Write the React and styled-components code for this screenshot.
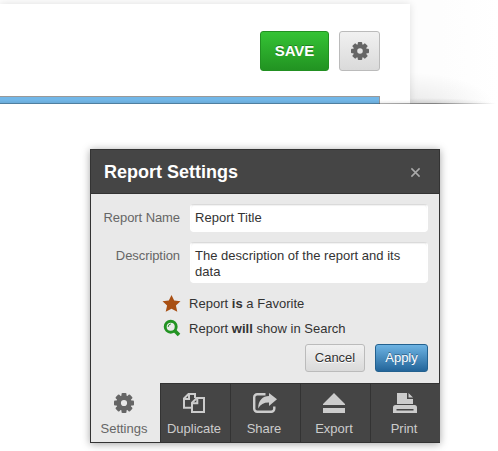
import React from "react";
import styled, { createGlobalStyle, css } from "styled-components";

const GlobalStyle = createGlobalStyle`
  *, *::before, *::after { box-sizing: border-box; }
  html, body { margin: 0; height: 100%; overflow: hidden; background: #fff; }
  body { font-family: "Liberation Sans", Arial, Helvetica, sans-serif; font-size: 13px; color: #333; }
  button, input, textarea { font: inherit; margin: 0; }
`;

const Page = styled.main`
  width: 498px;
  height: 451px;
  overflow: hidden;
  background: #fff;
`;

const Backdrop = styled.section`
  height: 104px;
  padding-top: 4px;
  position: relative;
  overflow: hidden;
  background:
    radial-gradient(ellipse 70px 6px at 425px 104px, rgba(0, 0, 0, 0.14), transparent),
    radial-gradient(ellipse 88px 32px at 405px 104px, rgba(0, 0, 0, 0.08), rgba(0, 0, 0, 0.035) 55%, transparent),
    linear-gradient(to right, #fdfdfd 440px, #fff);

  &::after {
    content: "";
    position: absolute;
    inset: auto 0 0 0;
    height: 4px;
    background:
      linear-gradient(to right, rgba(0, 0, 0, 0.25) 0 370px, rgba(0, 0, 0, 0.38) 435px, transparent 496px) bottom / 100% 1px no-repeat,
      linear-gradient(to top, rgba(0, 0, 0, 0.09), transparent) left / 410px 4px no-repeat;
  }
`;

const Sheet = styled.div`
  width: 410px;
  height: 100px;
  padding: 27px 30px 0 0;
  background: #fff;
  box-shadow: 0 0 8px rgba(0, 0, 0, 0.12);
`;

const Toolbar = styled.div`
  display: flex;
  justify-content: flex-end;
  gap: 10px;
  height: 65px;
`;

const BlueBar = styled.div`
  width: 380px;
  height: 8px;
  border: solid #999;
  border-width: 1px 1px 0 0;
  background: #72b7e8;
`;

const tones = {
  green: css`
    color: #fff;
    border-color: #229022;
    background: linear-gradient(#35c335, #229322);
    text-shadow: 0 -1px 0 rgba(0, 0, 0, 0.3);
    padding-bottom: 1px;
  `,
  gray: css`
    color: #333;
    border-color: #bbb;
    background: linear-gradient(#f1f1f1, #dadada);
    text-shadow: 0 1px 0 #fff;
  `,
  blue: css`
    color: #fff;
    border-color: #23618f;
    background: linear-gradient(#6db3e3, #23659a);
    text-shadow: 0 -1px 0 rgba(0, 0, 0, 0.35);
  `,
};

const Button = styled.button`
  display: flex;
  align-items: center;
  justify-content: center;
  width: ${(p) => p.$width}px;
  height: ${(p) => (p.$large ? 40 : 28)}px;
  padding: ${(p) => (p.$large ? "0" : "0 0 1px")};
  border: 1px solid;
  border-radius: 3px;
  font-size: ${(p) => (p.$large ? 15 : 13)}px;
  font-weight: ${(p) => (p.$large ? 700 : 400)};
  ${(p) => tones[p.$tone]}
`;

const Dialog = styled.section`
  width: 350px;
  height: 294px;
  margin: 45px 0 0 90px;
  border: 1px solid #333;
  background: #e9e9e9;
  box-shadow: 0 1px 8px rgba(0, 0, 0, 0.36);
`;

const DialogHeader = styled.header`
  display: flex;
  align-items: center;
  justify-content: space-between;
  height: 44px;
  padding: 0 18px 0 13px;
  border-bottom: 1px solid #333;
  background: #454545;
`;

const Title = styled.h1`
  margin: 0;
  font-size: 18px;
  line-height: 22px;
  color: #fff;
`;

const CloseButton = styled.button`
  display: flex;
  padding: 2px 1px 0 0;
  border: 0;
  background: none;
  color: #aaa;
`;

const Form = styled.form`
  height: 189px;
  padding: 10px 11px 0 12px;
`;

const Field = styled.label`
  display: grid;
  grid-template-columns: 77px 238px;
  column-gap: 10px;
  margin-bottom: 10px;
  line-height: 16px;
`;

const FieldName = styled.span`
  padding-top: 6px;
  text-align: right;
  white-space: nowrap;
  letter-spacing: -0.08px;
  color: #666;
`;

const controlStyle = css`
  width: 238px;
  border: 1px solid #fff;
  border-top-color: #dadada;
  border-radius: 4px;
  background: #fff;
  box-shadow: inset 0 1px 1px rgba(0, 0, 0, 0.06);
  color: #333;
  line-height: 16px;
  letter-spacing: 0.02px;
  outline: 0;
`;

const TextInput = styled.input`
  ${controlStyle}
  height: 28px;
  padding: 0 4px 1px;
`;

const TextArea = styled.textarea`
  ${controlStyle}
  display: block;
  height: 41px;
  padding: 5px 4px 2px;
  resize: none;
  overflow: hidden;
`;

const Flag = styled.div`
  display: grid;
  grid-template-columns: 18px 1fr;
  column-gap: 8px;
  align-items: center;
  height: 25px;
  padding-left: 60px;
  letter-spacing: 0.02px;
`;

const Flags = styled.div`
  margin-top: -2px;
`;

const Actions = styled.div`
  display: flex;
  justify-content: flex-end;
  gap: 10px;
  margin-top: 3px;
`;

const Tabs = styled.nav`
  display: grid;
  grid-template-columns: 69px repeat(4, 70px);
  height: 59px;
`;

const Tab = styled.button`
  display: flex;
  flex-direction: column;
  align-items: center;
  padding: ${(p) => (p.$active ? 8 : 7)}px 3px 0 0;
  border: solid #333;
  border-width: ${(p) => (p.$active ? "0" : "1px 0 0 1px")};
  background: ${(p) => (p.$active ? "transparent" : "#454545")};
  color: ${(p) => (p.$active ? "#666" : "#ccc")};
  line-height: 16px;
`;

const TabIcon = styled.span`
  display: flex;
  align-items: center;
  justify-content: flex-start;
  width: 22px;
  height: 24px;
  margin-bottom: 6px;
`;

const Icon = styled.svg`
  display: block;
  flex: none;
  overflow: visible;
`;

const teeth = [0, 45, 90, 135, 180, 225, 270, 315];

function Gear({ size, offset = 0 }) {
  return (
    <Icon width={size + offset} height={size} viewBox={`${-offset} 0 ${20 + offset} 20`} fill="#666">
      {teeth.map((angle) => (
        <rect key={angle} x="7.5" y="0" width="5" height="5" rx="1" transform={`rotate(${angle} 10 10)`} />
      ))}
      <circle cx="10" cy="10" r="5.4" fill="none" stroke="#666" strokeWidth="4.6" />
    </Icon>
  );
}

const Star = () => (
  <Icon width="18" height="17" viewBox="0 0 18 17">
    <path fill="#a84f13" d="m8.5 0 2.7 5.4 6.3.8-4.6 4.4 1.4 6.2-5.8-3.1-5.8 3.1 1.4-6.2L-.5 6.2l6.3-.8z" />
  </Icon>
);

const Search = () => (
  <Icon width="18" height="17" viewBox="0 0 18 17" fill="none" stroke="#229322">
    <circle cx="7.7" cy="6.7" r="5.5" strokeWidth="2.9" />
    <path d="m11.8 10.8 4.2 4.3" strokeWidth="3.6" />
    <path d="M5.2 6.9q0-2.5 2.7-3" strokeWidth="1" />
  </Icon>
);

const CloseIcon = () => (
  <Icon width="9" height="9" viewBox="0 0 9 9" fill="none" stroke="currentColor" strokeWidth="1.5">
    <path d="m.4.4 8.2 8.2m0-8.2L.4 8.6" />
  </Icon>
);

const DuplicateIcon = () => (
  <Icon width="22" height="20" viewBox="0 0 22 20" fill="none" stroke="currentColor" strokeWidth="2">
    <path d="M8.5 14.7H1V5.5L5.5 1H12v4M6 1v5H1" />
    <path fill="#454545" d="M9 9.8 13.8 5H21v14H9z" />
    <path d="M14.3 5v5.2H9" />
  </Icon>
);

const ShareIcon = () => (
  <Icon width="24" height="20" viewBox="0 0 24 20">
    <path d="M12.5 1.2H4.2a3 3 0 0 0-3 3v11.6a3 3 0 0 0 3 3h14.1a3 3 0 0 0 3-3v-2.3" fill="none" stroke="currentColor" strokeWidth="2.4" />
    <path fill="currentColor" d="M16 0v3.1C9.8 3.2 5.1 7.5 5.2 15.5 7.4 11.4 11 9.5 16 9.6V13l8-6.7z" />
  </Icon>
);

const ExportIcon = () => (
  <Icon width="22" height="20" viewBox="0 0 22 20" fill="currentColor">
    <path d="m11 0 11 11v1H0v-1zM0 15h22v5H0z" />
  </Icon>
);

const PrintIcon = () => (
  <Icon width="24" height="20" viewBox="0 0 24 20">
    <path fill="currentColor" d="M4 0h10v6h6v5H4zM15.5 0 20 4.5h-4.5zM2.5 12h19A2.5 2.5 0 0 1 24 14.5V20H0v-5.5A2.5 2.5 0 0 1 2.5 12" />
    <path d="M3.5 16h17v1.5h-17z" fill="#454545" />
  </Icon>
);

const tabs = [
  { label: "Settings", icon: <Gear size={20} offset={1} />, active: true },
  { label: "Duplicate", icon: <DuplicateIcon /> },
  { label: "Share", icon: <ShareIcon /> },
  { label: "Export", icon: <ExportIcon /> },
  { label: "Print", icon: <PrintIcon /> },
];

export default function App() {
  return (
    <Page>
      <GlobalStyle />
      <Backdrop>
        <Sheet>
          <Toolbar>
            <Button $large $tone="green" $width={69}>SAVE</Button>
            <Button $large $tone="gray" $width={41} aria-label="Settings">
              <Gear size={18} />
            </Button>
          </Toolbar>
          <BlueBar />
        </Sheet>
      </Backdrop>
      <Dialog>
        <DialogHeader>
          <Title>Report Settings</Title>
          <CloseButton aria-label="Close"><CloseIcon /></CloseButton>
        </DialogHeader>
        <Form>
          <Field>
            <FieldName>Report Name</FieldName>
            <TextInput defaultValue="Report Title" />
          </Field>
          <Field>
            <FieldName>Description</FieldName>
            <TextArea defaultValue="The description of the report and its data" />
          </Field>
          <Flags>
            <Flag><Star /><span>Report <b>is</b> a Favorite</span></Flag>
            <Flag><Search /><span>Report <b>will</b> show in Search</span></Flag>
          </Flags>
          <Actions>
            <Button type="button" $tone="gray" $width={60}>Cancel</Button>
            <Button type="button" $tone="blue" $width={53}>Apply</Button>
          </Actions>
        </Form>
        <Tabs>
          {tabs.map((tab) => (
            <Tab key={tab.label} $active={tab.active}>
              <TabIcon>{tab.icon}</TabIcon>
              {tab.label}
            </Tab>
          ))}
        </Tabs>
      </Dialog>
    </Page>
  );
}
